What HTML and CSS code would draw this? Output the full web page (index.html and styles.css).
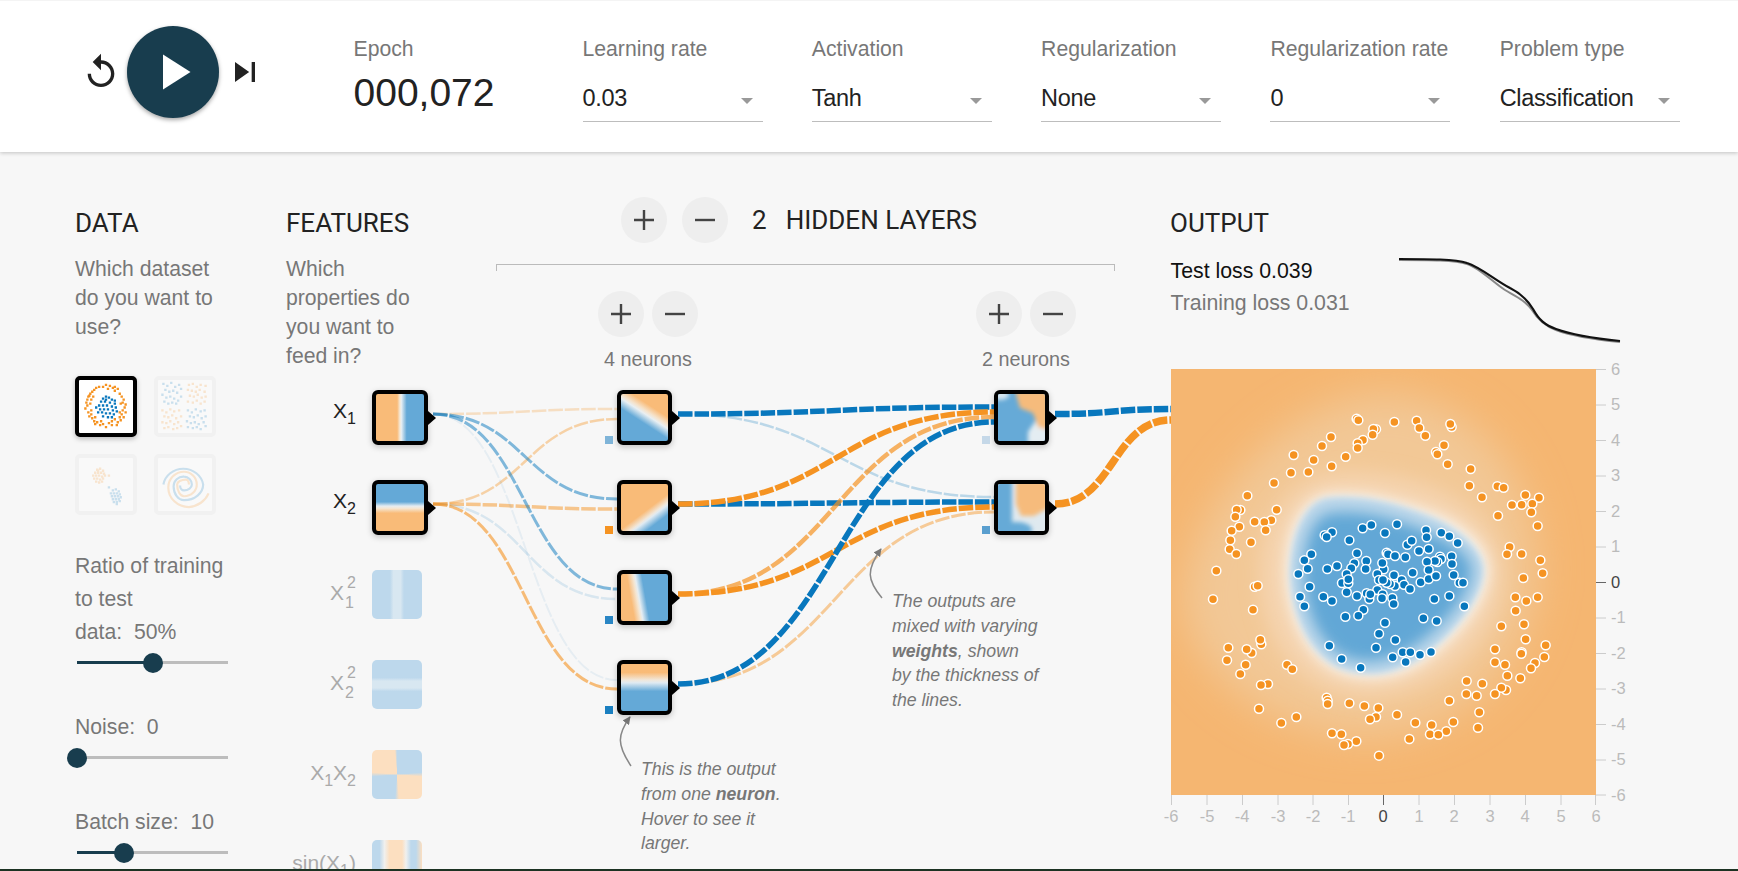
FILE: index.html
```html
<!DOCTYPE html>
<html lang="en">
<head>
<meta charset="utf-8">
<title>Neural network playground</title>
<link rel="stylesheet" href="styles.css">
</head>
<body>
<header class="topbar">
  <div class="controls">
    <button class="icon-btn reset"><svg viewBox="0 0 24 24"><path d="M12 5V1L7 6l5 5V7c3.31 0 6 2.69 6 6s-2.69 6-6 6-6-2.69-6-6H4c0 4.42 3.58 8 8 8s8-3.58 8-8-3.58-8-8-8z"/></svg></button>
    <button class="play"><svg viewBox="0 0 24 24"><path d="M8 5v14l11-7z"/></svg></button>
    <button class="icon-btn step"><svg viewBox="0 0 24 24"><path d="M6 18l8.5-6L6 6v12zM16 6v12h2V6h-2z"/></svg></button>
  </div>
  <div class="epoch"><div class="label">Epoch</div><div class="epoch-value">000,072</div></div>
  <div class="selects">
    <div class="field"><div class="label">Learning rate</div><div class="select"><span>0.03</span><i class="caret"></i></div></div>
    <div class="field"><div class="label">Activation</div><div class="select"><span>Tanh</span><i class="caret"></i></div></div>
    <div class="field"><div class="label">Regularization</div><div class="select"><span>None</span><i class="caret"></i></div></div>
    <div class="field"><div class="label">Regularization rate</div><div class="select"><span>0</span><i class="caret"></i></div></div>
    <div class="field"><div class="label">Problem type</div><div class="select"><span>Classification</span><i class="caret"></i></div></div>
  </div>
</header>

<main class="main">
  <svg class="links" viewBox="0 152 1738 717" fill="none">
    <defs><marker id="tip" viewBox="0 0 10 10" refX="9" refY="5" markerWidth="8" markerHeight="8" orient="auto-start-reverse" markerUnits="userSpaceOnUse"><path d="M0 0L10 5L0 10z" fill="#777"/></marker></defs>
    <g class="dash">
      <path class="o" stroke-opacity=".25" stroke-width="2.5" d="M433 414C525 414 525 409 617 409"/>
      <path class="o" stroke-opacity=".38" stroke-width="2.5" d="M433 504C525 504 525 419 617 419"/>
      <path class="b" stroke-opacity=".5" stroke-width="3" d="M433 414C525 414 525 499 617 499"/>
      <path class="o" stroke-opacity=".5" stroke-width="3.5" d="M433 504C525 504 525 509 617 509"/>
      <path class="b" stroke-opacity=".5" stroke-width="3" d="M433 414C525 414 525 589 617 589"/>
      <path class="b" stroke-opacity=".13" stroke-width="2.5" d="M433 504C525 504 525 599 617 599"/>
      <path class="b" stroke-opacity=".07" stroke-width="2" d="M433 414C525 414 525 680 617 680"/>
      <path class="o" stroke-opacity=".6" stroke-width="3" d="M433 504C525 504 525 689 617 689"/>
      <path class="b" stroke-opacity=".25" stroke-width="2.5" d="M678 414C836 414 836 497 994 497"/>
      <path class="b" stroke-width="5.5" d="M678 504C836 504 836 502 994 502"/>
      <path class="o" stroke-opacity=".7" stroke-width="4.5" d="M678 594C836 594 836 417 994 417"/>
      <path class="o" stroke-opacity=".45" stroke-width="3" d="M678 684C836 684 836 512 994 512"/>
      <path class="b" stroke-width="5.5" d="M678 414C836 414 836 407 994 407"/>
      <path class="o" stroke-width="5.5" d="M678 504C836 504 836 412 994 412"/>
      <path class="o" stroke-width="5.5" d="M678 594C836 594 836 507 994 507"/>
      <path class="b" stroke-width="5.5" d="M678 684C836 684 836 422 994 422"/>
      <path class="b" stroke-width="6.5" d="M1055 414C1113 414 1113 409 1171 409"/>
      <path class="o" stroke-width="7.5" d="M1055 504C1113 504 1113 420 1171 420"/>
    </g>
    <path class="note-arrow" marker-end="url(#tip)" d="M631 766C617 745 617 735 630 717"/>
    <path class="note-arrow" marker-end="url(#tip)" d="M882 598C867 580 866 570 881 549"/>
  </svg>

  <section class="col-data">
    <h4>DATA</h4>
    <p class="desc">Which dataset<br>do you want to<br>use?</p>
    <div class="thumbs">
      <div class="thumb selected"><svg viewBox="0 0 54 54">
        <path class="pt po" d="M27 5h0M24 7h0M20 7h0M31 6h0M36 7h0M39 9h0M15 10h0M13 12h0M11 14h0M9 17h0M8 20h0M7 23h0M8 26h0M10 16h0M12 20h0M36 11h0M41 14h0M43 17h0M45 20h0M44 23h0M47 25h0M46 28h0M44 31h0M47 33h0M43 35h0M45 38h0M42 41h0M39 43h0M36 40h0M38 46h0M33 46h0M30 44h0M27 48h0M24 45h0M21 46h0M18 43h0M15 42h0M13 39h0M10 37h0M9 33h0M12 31h0M16 45h0M34 8h0M29 9h0M17 8h0M41 38h0M6 29h0M11 24h0M14 17h0M42 24h0M41 33h0M33 42h0M22 42h0M16 38h0M12 35h0"/>
        <path class="pt pb" d="M27 17h0M24 19h0M30 18h0M33 20h0M22 22h0M26 22h0M31 23h0M36 24h0M20 26h0M24 26h0M28 26h0M33 27h0M37 28h0M21 30h0M25 30h0M29 30h0M34 31h0M38 32h0M19 33h0M23 33h0M27 34h0M31 34h0M35 35h0M24 37h0M29 38h0M33 38h0M27 20h0M17 28h0M36 21h0"/>
      </svg></div>
      <div class="thumb"><svg viewBox="0 0 54 54">
        <path class="pt pb faded" d="M5 4h0M9 6h0M13 3h0M17 7h0M21 5h0M7 10h0M11 12h0M15 11h0M19 13h0M23 9h0M4 15h0M8 18h0M12 17h0M16 19h0M20 21h0M6 22h0M10 24h0M14 23h0M18 24h0M23 17h0M30 31h0M34 33h0M38 30h0M43 32h0M47 31h0M32 37h0M36 38h0M40 36h0M44 39h0M48 37h0M29 42h0M33 44h0M37 43h0M41 45h0M46 43h0M30 48h0M35 49h0M39 48h0M43 50h0M48 47h0"/>
        <path class="pt po faded" d="M31 5h0M35 4h0M39 7h0M43 5h0M48 6h0M30 10h0M34 11h0M38 12h0M42 10h0M47 12h0M32 16h0M36 17h0M40 15h0M44 18h0M48 17h0M30 22h0M35 23h0M39 21h0M43 24h0M47 22h0M4 31h0M8 33h0M12 30h0M16 32h0M21 31h0M6 37h0M10 38h0M14 36h0M18 39h0M23 37h0M4 43h0M8 44h0M12 42h0M16 45h0M20 43h0M6 49h0M10 48h0M15 50h0M19 49h0M23 47h0"/>
      </svg></div>
      <div class="thumb"><svg viewBox="0 0 54 54">
        <path class="pt po faded" d="M18 12h0M21 11h0M24 13h0M16 15h0M19 15h0M22 15h0M25 16h0M14 18h0M17 18h0M20 18h0M23 19h0M26 18h0M15 21h0M18 21h0M21 22h0M24 21h0M17 24h0M20 25h0M23 24h0M19 13h0M30 18h0"/>
        <path class="pt pb faded" d="M34 33h0M37 32h0M40 34h0M32 36h0M35 36h0M38 36h0M41 37h0M33 39h0M36 39h0M39 39h0M42 40h0M34 42h0M37 42h0M40 42h0M35 45h0M38 45h0M41 44h0M38 47h0M30 30h0"/>
      </svg></div>
      <div class="thumb"><svg viewBox="0 0 54 54" fill="none">
        <path class="spiral sb" d="M5 27A20.5 19 0 0 1 45.5 27A19.7 16 0 0 1 26 43A10.6 14 0 0 1 15.4 29A10 10 0 0 1 26 19A8 8 0 0 1 34 27A8 6 0 0 1 26 33A4 5 0 0 1 22 28"/>
        <path class="spiral so" d="M51 36A24 22 0 0 1 31 50A21 20 0 0 1 10 30A16 16 0 0 1 26 14A13 13 0 0 1 39 27A13 12 0 0 1 26 39A7 12 0 0 1 19 27A9 5 0 0 1 28 22A3 5 0 0 1 31 27"/>
      </svg></div>
    </div>
    <p class="slider-label first">Ratio of training<br>to test<br>data:&nbsp; 50%</p>
    <div class="slider"><div class="track"><div class="fill" style="width:50%"></div><div class="knob" style="left:50%"></div></div></div>
    <p class="slider-label">Noise:&nbsp; 0</p>
    <div class="slider"><div class="track"><div class="fill" style="width:0"></div><div class="knob" style="left:0"></div></div></div>
    <p class="slider-label">Batch size:&nbsp; 10</p>
    <div class="slider"><div class="track"><div class="fill" style="width:31%"></div><div class="knob" style="left:31%"></div></div></div>
  </section>

  <section class="col-features">
    <h4>FEATURES</h4>
    <p class="desc">Which<br>properties do<br>you want to<br>feed in?</p>
    <div class="feature on"><div class="feat-label">X<sub>1</sub></div><div class="node wide h-x1"></div></div>
    <div class="feature on"><div class="feat-label">X<sub>2</sub></div><div class="node wide h-x2"></div></div>
    <div class="feature"><div class="feat-label">X<span class="script"><sup>2</sup><sub>1</sub></span></div><div class="tile h-x1s"></div></div>
    <div class="feature"><div class="feat-label">X<span class="script"><sup>2</sup><sub>2</sub></span></div><div class="tile h-x2s"></div></div>
    <div class="feature"><div class="feat-label">X<sub>1</sub>X<sub>2</sub></div><div class="tile h-xy"></div></div>
    <div class="feature"><div class="feat-label">sin(X<sub>1</sub>)</div><div class="tile h-sin"></div></div>
  </section>

  <section class="col-network">
    <div class="layers-head">
      <button class="round"><svg viewBox="0 0 20 20"><path d="M0 10H20M10 0V20"/></svg></button>
      <button class="round"><svg viewBox="0 0 20 20"><path d="M0 10H20"/></svg></button>
      <span class="count">2</span><span class="head-title">HIDDEN LAYERS</span>
    </div>
    <div class="bracket"></div>
    <div class="layers">
      <div class="layer">
        <div class="layer-btns">
          <button class="round"><svg viewBox="0 0 20 20"><path d="M0 10H20M10 0V20"/></svg></button>
          <button class="round"><svg viewBox="0 0 20 20"><path d="M0 10H20"/></svg></button>
        </div>
        <div class="neurons">4 neurons</div>
        <div class="stack s1">
          <div class="node n-a"><i class="bias" style="background:#7fb4d8"></i></div>
          <div class="node n-b"><i class="bias" style="background:#f59322"></i></div>
          <div class="node n-c"><i class="bias" style="background:#2a86c4"></i></div>
          <div class="node n-d"><i class="bias" style="background:#1a7fc0"></i></div>
        </div>
      </div>
      <div class="layer">
        <div class="layer-btns">
          <button class="round"><svg viewBox="0 0 20 20"><path d="M0 10H20M10 0V20"/></svg></button>
          <button class="round"><svg viewBox="0 0 20 20"><path d="M0 10H20"/></svg></button>
        </div>
        <div class="neurons">2 neurons</div>
        <div class="stack s2">
          <div class="node"><i class="bias" style="background:#c5d8e8"></i>
            <svg class="heat" viewBox="0 0 47 47" preserveAspectRatio="none"><rect width="47" height="47" fill="#66aad7"/><g filter="url(#soft)"><ellipse cx="2" cy="1" rx="9" ry="5" fill="#d8e7f1"/><path d="M30 50H50V26H38L30 38z" fill="#e4edf2"/><path d="M17 -3H50V36L40 33 35 19 22 14z" fill="#f6bb7b"/></g></svg>
          </div>
          <div class="node"><i class="bias" style="background:#5a9fcf"></i>
            <svg class="heat" viewBox="0 0 47 47" preserveAspectRatio="none"><rect width="47" height="47" fill="#dfe9ef"/><g filter="url(#soft)"><rect x="-4" y="-4" width="18" height="56" fill="#66aad7"/><ellipse cx="18" cy="46" rx="16" ry="8" fill="#66aad7"/><path d="M18 -3H50V24L36 32H23L18 20z" fill="#f6bb7b"/></g></svg>
          </div>
        </div>
      </div>
    </div>
    <svg class="defs-only"><defs><filter id="soft" x="-30%" y="-30%" width="160%" height="160%"><feGaussianBlur stdDeviation="2"/></filter></defs></svg>
  </section>

  <section class="col-output">
    <h4>OUTPUT</h4>
    <div class="stats">
      <div class="losses"><div class="loss-test">Test loss 0.039</div><div class="loss-train">Training loss 0.031</div></div>
      <svg class="chart" viewBox="1399 254 225 95" fill="none">
        <path class="train-line" d="M1399 260C1430 260 1455 260 1467 264C1480 268 1495 284 1505 290C1515 296 1525 300 1532 310C1538 320 1545 326 1556 330C1575 337 1600 340 1620 342"/>
        <path class="test-line" d="M1399 259C1430 259 1455 259 1467 263C1480 267 1495 280 1510 288C1520 293 1527 299 1533 309C1539 320 1545 325 1556 329C1575 336 1600 339 1620 341"/>
      </svg>
    </div>
    <svg class="plot" viewBox="1171 369 480 465">
      <defs>
        <clipPath id="plotclip"><rect x="1171" y="369" width="425" height="426"/></clipPath>
        <filter id="b60" x="-40%" y="-40%" width="180%" height="180%"><feGaussianBlur stdDeviation="60"/></filter>
        <filter id="b32" x="-40%" y="-40%" width="180%" height="180%"><feGaussianBlur stdDeviation="28"/></filter>
        <filter id="b20" x="-30%" y="-30%" width="160%" height="160%"><feGaussianBlur stdDeviation="20"/></filter>
        <filter id="b9" x="-20%" y="-20%" width="140%" height="140%"><feGaussianBlur stdDeviation="9"/></filter>
      </defs>
      <g clip-path="url(#plotclip)">
        <rect x="1171" y="369" width="425" height="426" fill="#f5b671"/>
        <g transform="translate(1160 360) scale(.33333)">
          <path filter="url(#b60)" fill="#f2c896" d="M700 100C1000 130 1150 420 1130 680C1090 930 900 1120 620 1130C350 1130 60 930 70 700C100 420 400 90 700 100z"/>
          <path filter="url(#b32)" fill="#f5d4b0" d="M520 340C760 320 1020 430 1030 640C1030 840 820 1010 620 1010C420 1000 300 850 300 640C300 480 390 360 520 340z"/>
          <path filter="url(#b20)" fill="#f8f6f2" d="M495 405C600 390 720 420 835 465C930 505 985 570 985 630C985 710 910 820 790 905C715 955 620 968 535 935C440 893 385 775 378 650C375 535 410 430 495 405z"/>
          <path filter="url(#b9)" fill="#bcd7ea" d="M495 415C600 400 720 430 830 478C915 518 970 580 970 630C970 700 900 810 780 895C700 945 620 955 540 925C450 885 397 770 390 650C388 540 425 435 495 415z"/>
          <path filter="url(#b20)" fill="#62a7d6" d="M505 460C600 445 710 475 810 518C885 550 935 590 935 630C935 690 870 785 760 860C690 905 620 915 555 890C480 855 438 760 430 650C428 555 455 475 505 460z"/>
        </g>
      </g>
      <g class="pts" transform="translate(1160 360) scale(.33333)">
        <g class="orange">
<circle cx="590" cy="176"/><circle cx="595" cy="181"/><circle cx="703" cy="186"/><circle cx="770" cy="182"/><circle cx="778" cy="204"/><circle cx="796" cy="227"/><circle cx="875" cy="201"/><circle cx="871" cy="192"/><circle cx="648" cy="208"/><circle cx="640" cy="207"/><circle cx="638" cy="224"/><circle cx="609" cy="240"/><circle cx="593" cy="250"/><circle cx="593" cy="264"/><circle cx="513" cy="231"/><circle cx="486" cy="258"/><circle cx="401" cy="285"/><circle cx="461" cy="300"/><circle cx="515" cy="319"/><circle cx="557" cy="290"/><circle cx="393" cy="338"/><circle cx="445" cy="336"/><circle cx="342" cy="369"/><circle cx="262" cy="407"/><circle cx="852" cy="256"/><circle cx="828" cy="276"/><circle cx="832" cy="283"/><circle cx="863" cy="313"/><circle cx="932" cy="327"/><circle cx="928" cy="377"/><circle cx="966" cy="412"/><circle cx="1012" cy="379"/><circle cx="1031" cy="383"/><circle cx="1096" cy="405"/><circle cx="1137" cy="413"/><circle cx="1056" cy="435"/><circle cx="1085" cy="434"/><circle cx="1117" cy="431"/><circle cx="1114" cy="457"/><circle cx="1014" cy="467"/><circle cx="1133" cy="498"/><circle cx="241" cy="450"/><circle cx="230" cy="449"/><circle cx="226" cy="470"/><circle cx="350" cy="449"/><circle cx="334" cy="481"/><circle cx="313" cy="486"/><circle cx="284" cy="485"/><circle cx="317" cy="511"/><circle cx="238" cy="500"/><circle cx="215" cy="512"/><circle cx="211" cy="541"/><circle cx="273" cy="547"/><circle cx="209" cy="568"/><circle cx="229" cy="582"/><circle cx="169" cy="632"/><circle cx="284" cy="680"/><circle cx="293" cy="677"/><circle cx="159" cy="718"/><circle cx="279" cy="749"/><circle cx="1049" cy="561"/><circle cx="1041" cy="583"/><circle cx="1085" cy="582"/><circle cx="1141" cy="601"/><circle cx="1148" cy="640"/><circle cx="1090" cy="654"/><circle cx="1066" cy="712"/><circle cx="1099" cy="723"/><circle cx="1133" cy="712"/><circle cx="1067" cy="752"/><circle cx="1024" cy="799"/><circle cx="1092" cy="793"/><circle cx="1097" cy="838"/><circle cx="1157" cy="856"/><circle cx="1085" cy="877"/><circle cx="1084" cy="881"/><circle cx="1153" cy="891"/><circle cx="1005" cy="868"/><circle cx="1005" cy="907"/><circle cx="1035" cy="914"/><circle cx="1125" cy="909"/><circle cx="1113" cy="925"/><circle cx="1042" cy="947"/><circle cx="1081" cy="955"/><circle cx="920" cy="963"/><circle cx="967" cy="971"/><circle cx="1038" cy="990"/><circle cx="1024" cy="983"/><circle cx="1005" cy="1002"/><circle cx="919" cy="1002"/><circle cx="950" cy="1007"/><circle cx="868" cy="1022"/><circle cx="958" cy="1057"/><circle cx="954" cy="1103"/><circle cx="880" cy="1086"/><circle cx="859" cy="1114"/><circle cx="815" cy="1095"/><circle cx="810" cy="1123"/><circle cx="835" cy="1124"/><circle cx="766" cy="1088"/><circle cx="748" cy="1137"/><circle cx="711" cy="1064"/><circle cx="655" cy="1044"/><circle cx="648" cy="1071"/><circle cx="630" cy="1078"/><circle cx="613" cy="1038"/><circle cx="568" cy="1030"/><circle cx="500" cy="1013"/><circle cx="503" cy="1022"/><circle cx="503" cy="1032"/><circle cx="409" cy="1071"/><circle cx="364" cy="1089"/><circle cx="516" cy="1120"/><circle cx="544" cy="1123"/><circle cx="589" cy="1144"/><circle cx="564" cy="1152"/><circle cx="552" cy="1155"/><circle cx="657" cy="1187"/><circle cx="297" cy="1046"/><circle cx="324" cy="972"/><circle cx="303" cy="975"/><circle cx="241" cy="942"/><circle cx="257" cy="914"/><circle cx="201" cy="901"/><circle cx="205" cy="863"/><circle cx="275" cy="879"/><circle cx="260" cy="868"/><circle cx="304" cy="853"/><circle cx="301" cy="839"/><circle cx="381" cy="914"/><circle cx="397" cy="928"/>
        </g>
        <g class="blue">
<circle cx="516" cy="517"/><circle cx="494" cy="526"/><circle cx="500" cy="531"/><circle cx="568" cy="541"/><circle cx="608" cy="505"/><circle cx="634" cy="495"/><circle cx="675" cy="519"/><circle cx="711" cy="493"/><circle cx="798" cy="511"/><circle cx="800" cy="532"/><circle cx="844" cy="518"/><circle cx="868" cy="529"/><circle cx="893" cy="549"/><circle cx="742" cy="554"/><circle cx="755" cy="542"/><circle cx="777" cy="573"/><circle cx="806" cy="567"/><circle cx="591" cy="580"/><circle cx="454" cy="583"/><circle cx="433" cy="601"/><circle cx="443" cy="626"/><circle cx="415" cy="642"/><circle cx="502" cy="627"/><circle cx="531" cy="618"/><circle cx="583" cy="610"/><circle cx="574" cy="625"/><circle cx="619" cy="603"/><circle cx="617" cy="627"/><circle cx="671" cy="628"/><circle cx="667" cy="609"/><circle cx="680" cy="578"/><circle cx="684" cy="583"/><circle cx="705" cy="588"/><circle cx="736" cy="592"/><circle cx="840" cy="590"/><circle cx="843" cy="597"/><circle cx="875" cy="589"/><circle cx="876" cy="612"/><circle cx="832" cy="606"/><circle cx="825" cy="603"/><circle cx="801" cy="605"/><circle cx="806" cy="630"/><circle cx="758" cy="638"/><circle cx="702" cy="646"/><circle cx="652" cy="642"/><circle cx="560" cy="642"/><circle cx="546" cy="669"/><circle cx="565" cy="670"/><circle cx="565" cy="658"/><circle cx="449" cy="680"/><circle cx="705" cy="678"/><circle cx="690" cy="672"/><circle cx="680" cy="668"/><circle cx="657" cy="660"/><circle cx="669" cy="660"/><circle cx="725" cy="660"/><circle cx="732" cy="674"/><circle cx="750" cy="687"/><circle cx="782" cy="667"/><circle cx="806" cy="657"/><circle cx="828" cy="648"/><circle cx="881" cy="645"/><circle cx="898" cy="668"/><circle cx="909" cy="668"/><circle cx="652" cy="690"/><circle cx="620" cy="700"/><circle cx="628" cy="717"/><circle cx="631" cy="703"/><circle cx="591" cy="708"/><circle cx="560" cy="697"/><circle cx="420" cy="710"/><circle cx="490" cy="710"/><circle cx="516" cy="723"/><circle cx="433" cy="739"/><circle cx="668" cy="703"/><circle cx="666" cy="715"/><circle cx="697" cy="714"/><circle cx="701" cy="732"/><circle cx="610" cy="749"/><circle cx="595" cy="767"/><circle cx="556" cy="770"/><circle cx="675" cy="788"/><circle cx="823" cy="717"/><circle cx="868" cy="708"/><circle cx="913" cy="739"/><circle cx="790" cy="775"/><circle cx="830" cy="783"/><circle cx="657" cy="821"/><circle cx="706" cy="840"/><circle cx="508" cy="857"/><circle cx="648" cy="863"/><circle cx="545" cy="897"/><circle cx="602" cy="923"/><circle cx="698" cy="892"/><circle cx="728" cy="877"/><circle cx="751" cy="877"/><circle cx="737" cy="906"/><circle cx="780" cy="884"/><circle cx="813" cy="876"/>
        </g>
      </g>
      <g class="axis">
        <path d="M1596 369.5H1606M1596 405H1606M1596 440.5H1606M1596 476H1606M1596 511.5H1606M1596 547H1606M1596 618H1606M1596 653.5H1606M1596 689H1606M1596 724.5H1606M1596 760H1606M1596 795H1606"/>
        <path d="M1171.5 795V805M1207 795V805M1242.5 795V805M1278 795V805M1313 795V805M1348.5 795V805M1419 795V805M1454.5 795V805M1490 795V805M1525.5 795V805M1561 795V805M1595.5 795V805"/>
        <path class="zero" d="M1596 582.5H1606M1383.5 795V805"/>
        <g class="ylab">
          <text x="1611" y="375">6</text><text x="1611" y="410">5</text><text x="1611" y="446">4</text><text x="1611" y="481">3</text><text x="1611" y="517">2</text><text x="1611" y="552">1</text><text class="z" x="1611" y="588">0</text><text x="1611" y="623">-1</text><text x="1611" y="659">-2</text><text x="1611" y="694">-3</text><text x="1611" y="730">-4</text><text x="1611" y="765">-5</text><text x="1611" y="801">-6</text>
        </g>
        <g class="xlab">
          <text x="1171" y="822">-6</text><text x="1207" y="822">-5</text><text x="1242" y="822">-4</text><text x="1278" y="822">-3</text><text x="1313" y="822">-2</text><text x="1348" y="822">-1</text><text class="z" x="1383" y="822">0</text><text x="1419" y="822">1</text><text x="1454" y="822">2</text><text x="1490" y="822">3</text><text x="1525" y="822">4</text><text x="1561" y="822">5</text><text x="1596" y="822">6</text>
        </g>
      </g>
    </svg>
  </section>

  <p class="note note-neuron">This is the output<br>from one <b>neuron</b>.<br>Hover to see it<br>larger.</p>
  <p class="note note-weights">The outputs are<br>mixed with varying<br><b>weights</b>, shown<br>by the thickness of<br>the lines.</p>
</main>
</body>
</html>
```
FILE: styles.css
```css
* { box-sizing: border-box; }
html, body { margin: 0; height: 100%; overflow: hidden; }
body {
  background: #f7f7f7;
  font-family: "Liberation Sans", Arial, sans-serif;
  color: #777;
  border-bottom: 2px solid #1c3222;
}
button { border: 0; padding: 0; background: none; cursor: pointer; }
p { margin: 0; }

/* top bar */
.topbar {
  position: relative;
  z-index: 3;
  display: flex;
  height: 152px;
  background: #fff;
  border-top: 1px solid #f4f4f4;
  box-shadow: 0 1px 4px rgba(0, 0, 0, .22);
}
.controls { display: flex; align-items: center; width: 353.5px; padding: 0 0 9px 81px; gap: 6px; }
.icon-btn { width: 40px; height: 40px; flex: none; }
.icon-btn svg { display: block; width: 40px; height: 40px; fill: #222; }
.play {
  width: 92px; height: 92px; flex: none;
  border-radius: 50%;
  background: #183d4e;
  box-shadow: 0 2px 4px rgba(0, 0, 0, .35);
  display: flex; align-items: center; justify-content: center;
}
.play svg { width: 60px; height: 60px; fill: #fff; }
.epoch { width: 229px; padding-top: 35px; }
.label { font-size: 21.2px; line-height: 26px; color: #777; white-space: nowrap; }
.epoch-value { font-size: 39px; line-height: 46px; color: #222; margin-top: 8px; }
.selects { display: flex; gap: 49.3px; padding-top: 35px; }
.field { width: 180px; }
.select {
  display: flex; align-items: center; justify-content: space-between;
  height: 40px; margin-top: 20px; padding: 0 10px 6px 0;
  border-bottom: 1px solid #bdbdbd;
  font-size: 23.5px; letter-spacing: -.34px; color: #222;
}
.caret { width: 0; height: 0; margin-top: 4px; border: 6px solid transparent; border-top-color: #999; border-bottom: 0; }

/* main */
.main {
  position: relative;
  display: flex;
  height: 717px;
  padding-left: 75px;
  overflow: hidden;
  background: #f7f7f7;
}
.links { position: absolute; left: 0; top: 0; width: 1738px; height: 717px; z-index: 0; }
.dash path { stroke-dasharray: 14.5 2; }
.links .o { stroke: #f59322; }
.links .b { stroke: #0877bd; }
.note-arrow { stroke: #888; stroke-width: 1.5; }
.main section { position: relative; z-index: 1; flex: none; }
h4 {
  margin: 56px 0 0;
  font: 400 26px/31px Roboto, sans-serif;
  color: #222;
}
.desc { margin-top: 15px; font-size: 21.2px; line-height: 29px; color: #777; }

.col-data { width: 211px; }
.thumbs { display: grid; grid-template-columns: 62px 62px; grid-auto-rows: 61px; gap: 17px; margin-top: 35px; }
.thumb { border: 4px solid #f1f1f1; border-radius: 5px; background: #f9f9f9; }
.thumb svg { display: block; width: 100%; height: 100%; }
.thumb.selected { border-color: #000; background: #fff; box-shadow: 0 2px 5px rgba(0, 0, 0, .25); }
.pt { stroke-width: 2.4; stroke-linecap: square; fill: none; }
.po { stroke: #f59322; }
.pb { stroke: #0877bd; }
.faded { opacity: .2; }
.spiral { stroke-width: 2.2; opacity: .2; }
.so { stroke: #f59322; }
.sb { stroke: #0877bd; }
.slider-label { margin-top: 38px; font-size: 21.2px; line-height: 33px; white-space: nowrap; }
.slider-label + .slider { margin-top: 4px; }
.slider-label.first { margin-top: 34px; }
.slider { height: 20px; width: 153px; padding: 9px 0 0 2px; }
.track { position: relative; width: 151px; height: 3px; background: #bdbdbd; }
.fill { height: 3px; background: #183d4e; }
.knob { position: absolute; top: -8.5px; width: 20px; height: 20px; margin-left: -10px; border-radius: 50%; background: #183d4e; }

.col-features { width: 210px; }
.col-features .desc { margin-bottom: 20px; }
.feature { display: flex; height: 90px; gap: 16px; }
.feat-label {
  width: 70px; padding-top: 11px;
  font-size: 21px; line-height: 24px; text-align: right; white-space: nowrap;
  color: #aaa;
}
.feature.on .feat-label { color: #222; padding-top: 9px; }
.feat-label sub { font-size: 16px; line-height: 0; vertical-align: -6px; }
.script { display: inline-flex; flex-direction: column; vertical-align: top; width: 11px; margin-left: 1px; text-align: left; }
.script sup { font-size: 16px; line-height: 12px; margin-top: -4px; vertical-align: baseline; padding-left: 2px; }
.script sub { font-size: 16px; line-height: 14px; margin-top: 7px; vertical-align: baseline; }

.node {
  position: relative;
  flex: none;
  width: 55px; height: 55px;
  border: 4px solid #000;
  border-radius: 6px;
  background: #eee;
  box-shadow: 0 2px 6px rgba(0, 0, 0, .22);
}
.node.wide { width: 56px; }
.node::after {
  content: "";
  position: absolute;
  top: 50%; right: -12px;
  margin-top: -7px;
  border-style: solid;
  border-width: 7px 0 7px 8px;
  border-color: transparent transparent transparent #000;
}
.heat { display: block; width: 100%; height: 100%; border-radius: 2px; }
.tile { width: 50px; height: 49px; border-radius: 5px; }
.h-x1 { background: linear-gradient(90deg, #f9bb78 0 44%, #f5ead9 50%, #e5edf2 53%, #64a9d7 64%); }
.h-x2 { background: linear-gradient(180deg, #64a9d7 0 38%, #e5edf2 47%, #f5e6d2 52%, #f9bb78 62%); }
.h-x1s { background: linear-gradient(90deg, #bdd8ec 0 36%, #d8e7f1 43% 57%, #bdd8ec 64%); }
.h-x2s { background: linear-gradient(180deg, #bdd8ec 0 36%, #d8e7f1 43% 57%, #bdd8ec 64%); }
.h-xy { background: conic-gradient(#bdd8ec 0 85deg, #fcdfc0 95deg 175deg, #bdd8ec 185deg 265deg, #fcdfc0 275deg 355deg, #bdd8ec 360deg); }
.h-sin { background: linear-gradient(90deg, #bdd8ec 0 15%, #f0f0ee 25%, #fcdfc0 35% 60%, #f0f0ee 68%, #bdd8ec 78% 88%, #fcdfc0 100%); }
.n-a { background: linear-gradient(33deg, #64a9d7 0 42%, #e9eff2 55%, #f5e3cc 60%, #f9bb78 70%); }
.n-b { background: linear-gradient(143deg, #f9bb78 0 55%, #f1e7da 65%, #dfeaf2 68%, #64a9d7 80%); }
.n-c { background: linear-gradient(80deg, #f9bb78 0 25%, #f5e6d2 36%, #e5edf2 40%, #64a9d7 52%); }
.n-d { background: linear-gradient(180deg, #f9bb78 0 18%, #f1e7da 34%, #dfeaf2 40%, #64a9d7 58%); }
.bias { position: absolute; left: -16px; bottom: -3px; width: 8px; height: 8px; }

.col-network { width: 619px; }
.layers-head { display: flex; align-items: center; height: 46px; margin-top: 45px; padding-left: 125px; gap: 15px; color: #222; }
.round {
  display: flex; align-items: center; justify-content: center;
  width: 46px; height: 46px; border-radius: 50%; background: #eee; flex: none;
}
.round svg { width: 20px; height: 20px; fill: none; stroke: #444; stroke-width: 2.4; }
.count { margin-left: 9px; font: 400 26px/30px Roboto, sans-serif; }
.head-title { margin-left: 4px; font: 400 26px/30px Roboto, sans-serif; }
.bracket { height: 7px; margin-top: 21px; border: 1px solid #bbb; border-bottom: 0; }
.layers { display: flex; gap: 228px; padding: 20px 0 0 77px; }
.layer { width: 150px; }
.layer-btns { display: flex; justify-content: center; gap: 8px; }
.neurons { margin-top: 10px; font-size: 19.8px; line-height: 24px; text-align: center; color: #777; }
.stack { display: flex; flex-direction: column; gap: 35px; margin-top: 19px; padding-left: 44px; }
.s2 { padding-left: 43px; }

.defs-only { position: absolute; width: 0; height: 0; }

.col-output { margin-left: 56px; width: 490px; }
.col-output h4 { margin-left: -1px; }
.stats { display: flex; height: 115px; margin-top: 15px; }
.losses { width: 228px; padding-top: 1px; margin-left: -.5px; font-size: 21.3px; line-height: 32px; white-space: nowrap; }
.loss-test { color: #111; }
.loss-train { color: #777; }
.chart { width: 225px; height: 95px; }
.test-line { stroke: #111; stroke-width: 2.2; }
.train-line { stroke: #888; stroke-width: 2; }
.plot { display: block; width: 480px; height: 465px; overflow: visible; }
.pts circle { r: 13.5px; stroke: #fff; stroke-width: 4.5px; }
.orange circle { fill: #f59322; }
.blue circle { fill: #0877bd; }
.axis path { stroke: #ccc; stroke-width: 1; fill: none; }
.axis .zero { stroke: #666; }
.axis text { font: 16.5px "Liberation Sans", Arial, sans-serif; fill: #bbb; }
.axis .z { fill: #444; }
.xlab text { text-anchor: middle; }

.note {
  position: absolute;
  z-index: 1;
  font-size: 17.7px;
  line-height: 24.8px;
  font-style: italic;
  color: #777;
  white-space: nowrap;
}
.note-neuron { left: 641px; top: 605px; }
.note-weights { left: 892px; top: 437px; }
```
